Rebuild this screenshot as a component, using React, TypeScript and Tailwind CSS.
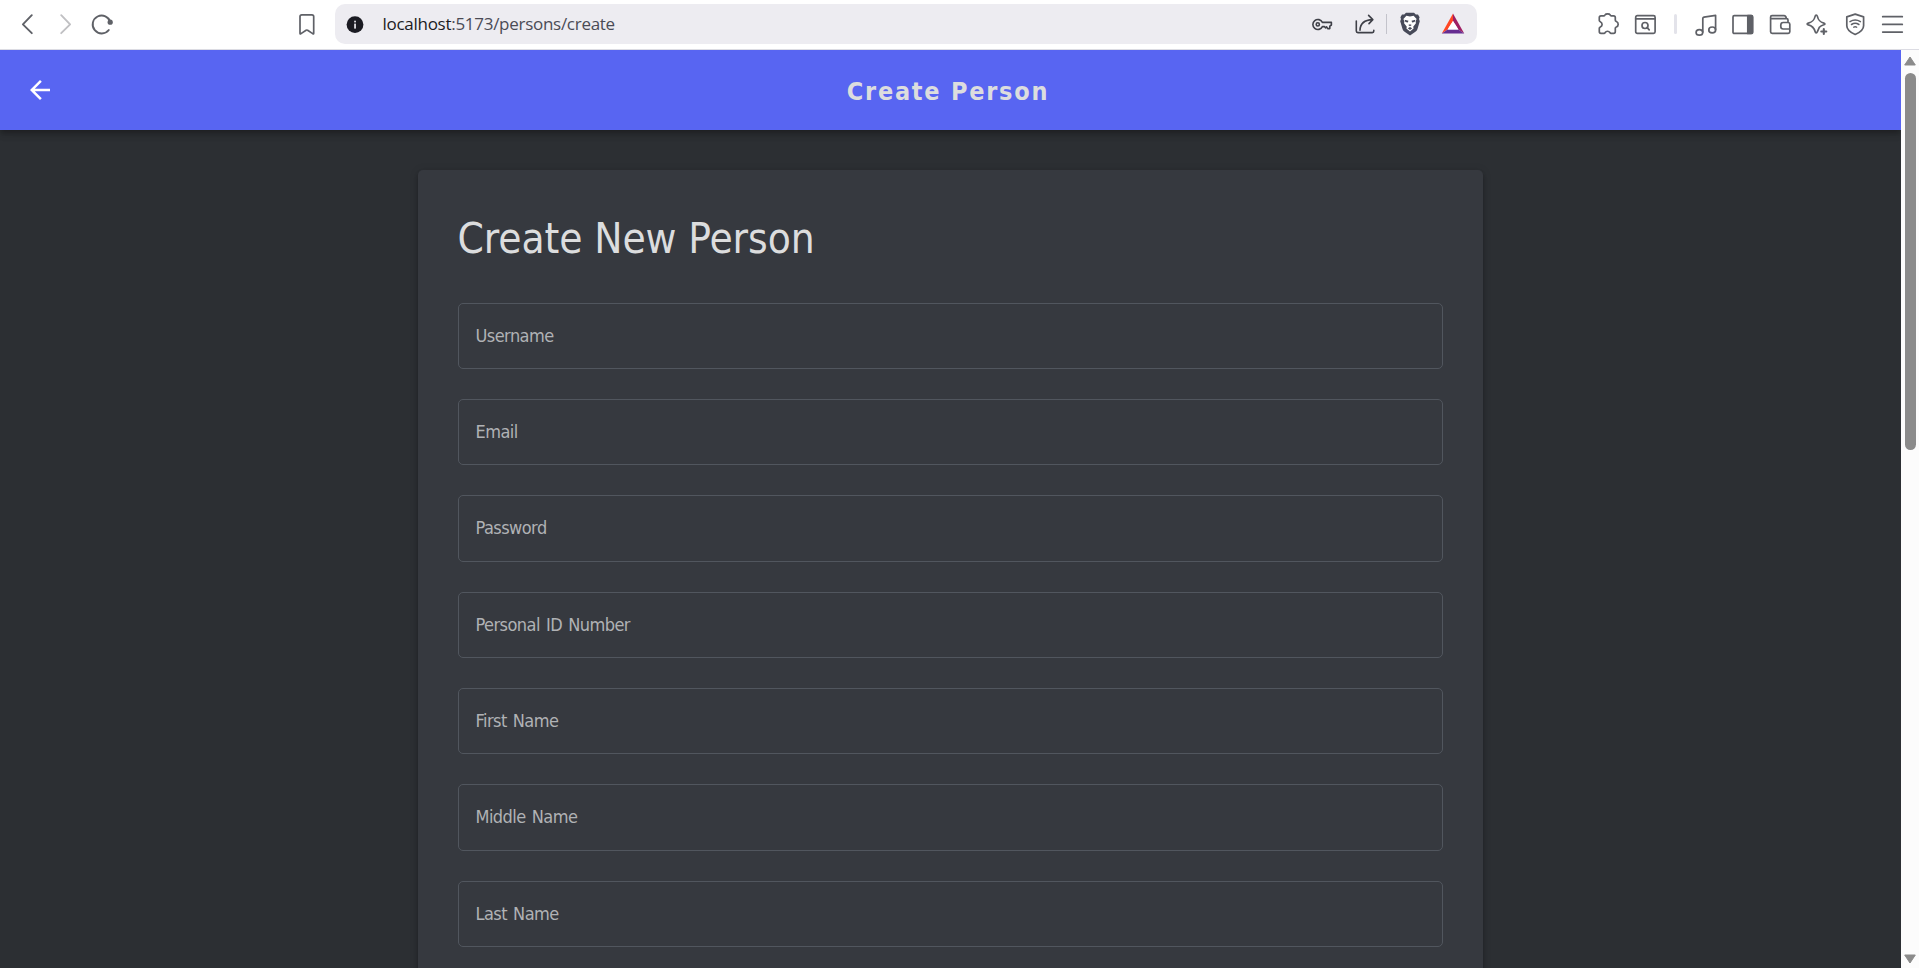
import type { ReactNode } from "react";

type IconProps = { className?: string; children: ReactNode };

function Icon({ className = "", children }: IconProps) {
  return (
    <svg
      viewBox="0 0 24 24"
      className={`size-6 shrink-0 ${className}`}
      fill="none"
      stroke="currentColor"
      strokeWidth="1.7"
      strokeLinecap="round"
      strokeLinejoin="round"
    >
      {children}
    </svg>
  );
}

function AddressBar() {
  return (
    <div className="ml-4 flex h-10 w-[1142px] shrink-0 items-center rounded-[10px] bg-[#edecf1] text-[#3f4048]">
      <svg viewBox="0 0 18 18" className="ml-[11px] size-[18px] shrink-0">
        <circle cx="9" cy="9.6" r="8.4" fill="#1b1b22" />
        <rect x="8.2" y="8.6" width="1.7" height="5" fill="#edecf1" />
        <rect x="8.2" y="5.7" width="1.7" height="1.7" fill="#edecf1" />
      </svg>
      <div className="ml-[18.5px] flex-1 font-['Open_Sans',sans-serif] text-[17px] leading-6 tracking-[-0.28px] whitespace-nowrap text-[#4a4b55]">
        <span className="text-[#1b1b22]">localhost</span>:5173/persons/create
      </div>
      <Icon className="mr-[19px]">
        <g strokeWidth="1.6">
          <path d="M12.4 10.4A5 5 0 1 0 12.4 14.6H14.4L15.4 15.8L16.6 14.8L17.7 16.6H19.8V14.2L21.4 13V10.4Z" />
          <circle cx="7.8" cy="12.4" r="1.6" />
        </g>
      </Icon>
      <Icon className="mr-[9px]">
        <g strokeWidth="1.6">
          <path d="M3.3 9V19Q3.3 20.6 4.9 20.6H19.3Q20.8 20.6 20.8 19V18.4" />
          <path d="M7 18.2C7.2 11.5 11.3 7.9 19.6 7.6M15.6 3.4L19.8 7.6L16 11.6" />
        </g>
      </Icon>
      <div className="mr-[12px] h-5 w-px bg-[#c3c3cb]" />
      <svg viewBox="0 0 22 24" className="mr-[20px] h-6 w-[22px] shrink-0">
        <path
          d="M7 0.8H15L16.8 2.6L19 2.4L20.6 5.2L20 7L20.8 9.2L18.4 17.2Q17.8 18.8 16.4 19.8L11 23.6L5.6 19.8Q4.2 18.8 3.6 17.2L1.2 9.2L2 7L1.4 5.2L3 2.4L5.2 2.6Z"
          fill="#474a59"
        />
        <path
          d="M7.4 3.8L11 4.5L14.6 3.8L17.6 7L16.6 9.2L16.9 11.2L14.2 14.8L14.6 16.4L11 19.4L7.4 16.4L7.8 14.8L5.1 11.2L5.4 9.2L4.4 7Z"
          fill="#ffffff"
        />
        <path
          d="M5.6 7.8L9.5 8.7L8.8 10.4L6.4 9.9ZM16.4 7.8L12.5 8.7L13.2 10.4L15.6 9.9ZM9.3 13L11 14.2L12.7 13L11.8 12.5H10.2ZM8.8 16.2L11 15L13.2 16.2L11 17.9Z"
          fill="#474a59"
        />
      </svg>
      <svg viewBox="0 0 24 24" className="mr-[12px] size-6 shrink-0">
        <path d="M12 1.6L0.8 21.6L6.6 17.6L12 9Z" fill="#ff4724" />
        <path d="M12 1.6L23.2 21.6L17.4 17.6L12 9Z" fill="#9e1f63" />
        <path d="M0.8 21.6H23.2L17.4 17.6H6.6Z" fill="#662d91" />
        <path d="M12 9L6.6 17.6H17.4Z" fill="#ffffff" />
      </svg>
    </div>
  );
}

function BrowserBar() {
  return (
    <div className="flex h-[50px] shrink-0 items-center border-b border-[#dcdce3] bg-white pb-px pl-4 text-[#5f6167]">
      <Icon>
        <path strokeWidth="1.9" d="M15.8 3.2L6.9 12.3L15.8 21.2" />
      </Icon>
      <Icon className="ml-3.5 text-[#c0c0c3]">
        <path strokeWidth="1.9" d="M7.2 3.2L16.1 12.3L7.2 21.2" />
      </Icon>
      <Icon className="ml-3">
        <path strokeWidth="1.9" d="M20.4 10.2A9 9 0 1 0 18.8 18" />
        <circle cx="20.2" cy="10.2" r="2.6" fill="currentColor" stroke="none" />
      </Icon>
      <Icon className="ml-[181px]">
        <path d="M5 4.6Q5 2.8 6.8 2.8H16.9Q18.7 2.8 18.7 4.6V21.2Q18.7 22.4 17.7 21.6L12.6 18.2Q11.8 17.8 11.1 18.2L6 21.6Q5 22.4 5 21.2Z" />
      </Icon>
      <AddressBar />
      <Icon className="ml-[119px]">
        <path d="M3.3 5.6Q3.3 3.8 5 3.8H8.1C8.7 3.8 8.9 3.3 9.1 2.8C9.6 1.9 10.6 1.9 11.6 1.9S13.6 1.9 14.1 2.9C14.3 3.4 14.6 3.8 15.2 3.8H17.6Q19.3 3.8 19.3 5.6V8.2C19.3 8.9 19.7 9.2 20.4 9.5C22.9 10.7 22.7 14.2 20.3 15C19.6 15.2 19.3 15.6 19.3 16.3V19.6Q19.3 21.4 17.6 21.4H15C14.5 21.4 14.2 21 13.9 20.5C12.7 18.8 10.2 18.9 9.2 20.5C8.9 21 8.6 21.4 8 21.4H5Q3.3 21.4 3.3 19.6V16.2C3.3 15.6 3.8 15.4 4.3 15.1C6.7 13.9 6.7 11 4.3 9.8C3.7 9.5 3.3 9.3 3.3 8.6Z" />
      </Icon>
      <Icon className="ml-[13px]">
        <rect x="2.7" y="3.6" width="19.4" height="17.8" rx="1.6" />
        <path d="M2.7 6.9H22.1" />
        <circle cx="12" cy="13.5" r="3" />
        <path d="M14.2 15.7L16.2 17.8" />
      </Icon>
      <div className="ml-[17px] h-5 w-[3px] rounded-full bg-[#e3e3ea]" />
      <Icon className="ml-[17px]">
        <path d="M8.8 20V6.6Q8.8 5.4 10 5.1L21.6 3.4V17.6" />
        <ellipse cx="5.4" cy="20.4" rx="3.3" ry="2.7" />
        <ellipse cx="18.2" cy="17.9" rx="3.4" ry="2.9" />
      </Icon>
      <Icon className="ml-[13px]">
        <rect x="2" y="3.7" width="19.4" height="17.7" rx="1.2" />
        <path d="M16.8 3.7H20.6Q21.6 3.7 21.6 4.7V20.4Q21.6 21.4 20.6 21.4H16.8Z" fill="currentColor" />
      </Icon>
      <Icon className="ml-[13px]">
        <path d="M20 10V8Q20 6.6 18.6 6.6H2.6V5.1Q2.6 3.7 4 3.7H16Q18 3.7 18.4 6.6M2.6 6V19.8Q2.6 21.4 4.2 21.4H20.2Q21.8 21.4 21.8 19.8V12.2Q21.8 10.6 20.2 10.5H15.2Q12.8 10.5 12.8 13V14.6Q12.8 17 15.2 17H21.8" />
      </Icon>
      <Icon className="ml-[13px]">
        <path d="M11.2 3Q12 3 12.3 4.1C13.4 8.5 14.8 10 18.8 11.1Q21 11.9 18.8 12.8C16.8 13.4 15.4 14.1 14.4 15.2L12.3 19.8Q12 20.9 11.2 20.9T10.2 19.8C9.1 15.6 7.6 13.9 3.3 12.9Q1 12 3.3 11.1C7.6 10 9.1 8.5 10.2 4.1Q10.4 3 11.2 3Z" />
        <path d="M18.8 17V22M16.3 19.5H21.3" strokeWidth="2.1" />
      </Icon>
      <Icon className="ml-[14px]">
        <path d="M12.2 2.1L20.6 4.9V13.7C20.6 18.1 15.8 20.9 12.2 22.5C8.6 20.9 3.8 18.1 3.8 13.7V4.9Z" />
        <path d="M7 9.7Q12.2 6.5 17.4 9.7M8.5 12.5Q12.2 10.1 15.9 12.5M10.8 15.1Q12.2 14.5 13.6 15.1" strokeWidth="1.5" />
      </Icon>
      <Icon className="ml-[13px]">
        <path d="M2.7 4.7H22.3M2.7 12.4H22.3M2.7 20.1H22.3" />
      </Icon>
    </div>
  );
}

function PageHeader() {
  return (
    <header className="relative z-10 flex h-20 shrink-0 items-center bg-[#5865f2] shadow-[0_2px_5px_-1px_rgba(0,0,0,0.2),0_5px_6px_0_rgba(0,0,0,0.14),0_1px_12px_0_rgba(0,0,0,0.12)]">
      <button className="flex w-20 justify-center" aria-label="Back">
        <svg viewBox="0 0 24 24" className="size-[30px]" fill="#ffffff">
          <path d="M20 11H7.83l5.59-5.59L12 4l-8 8 8 8 1.41-1.41L7.83 13H20v-2z" />
        </svg>
      </button>
      <div className="flex-1 pt-[3px] pr-[85px] text-center text-[25px] leading-8 font-bold tracking-[1.75px] text-[#dcddde]">
        Create Person
      </div>
    </header>
  );
}

const fields = [
  "Username",
  "Email",
  "Password",
  "Personal ID Number",
  "First Name",
  "Middle Name",
  "Last Name",
];

function PersonForm() {
  return (
    <section className="mx-auto mt-10 h-[900px] w-[1065px] rounded-[5px] bg-[#36393f] px-10 pt-10 shadow-[0_4px_5px_-2px_rgba(0,0,0,0.2),0_3px_5px_0_rgba(0,0,0,0.14),0_1px_10px_0_rgba(0,0,0,0.12)]">
      <h1 className="mb-[35.7px] -ml-[0.5px] text-[42px] leading-[57px] tracking-[-0.1px] text-[#dcddde]">
        Create New Person
      </h1>
      <form className="flex flex-col gap-[30px]">
        {fields.map((field) => (
          <label
            key={field}
            className="flex h-[66.37px] items-center rounded-[5px] border border-[#51565e] pb-[0.5px] pl-[16.5px] text-lg leading-7 tracking-[-0.55px] text-[#b0b2b5] [word-spacing:1.5px]"
          >
            {field}
          </label>
        ))}
      </form>
    </section>
  );
}

function Scrollbar() {
  return (
    <div className="flex w-[18px] shrink-0 flex-col items-center bg-[#fcfcfc]">
      <svg viewBox="0 0 12 10" className="mt-[6px] h-2.5 w-3" fill="#8b8b8b" stroke="#8b8b8b" strokeLinejoin="round">
        <path d="M6 1L11.3 9H0.7Z" />
      </svg>
      <div className="mt-[7px] ml-px h-[377px] w-[11px] rounded-full bg-[#8b8b8b]" />
      <svg viewBox="0 0 12 10" className="mt-auto mb-1 h-2.5 w-3" fill="#8b8b8b" stroke="#8b8b8b" strokeLinejoin="round">
        <path d="M6 9L0.7 1H11.3Z" />
      </svg>
    </div>
  );
}

export default function App() {
  return (
    <div className="flex h-[968px] w-[1919px] flex-col overflow-hidden font-['DejaVu_Sans_Condensed','DejaVu_Sans',sans-serif]">
      <BrowserBar />
      <div className="flex min-h-0 flex-1">
        <main className="flex min-w-0 flex-1 flex-col overflow-hidden bg-[#2c2f33]">
          <PageHeader />
          <div className="min-h-0 flex-1">
            <PersonForm />
          </div>
        </main>
        <Scrollbar />
      </div>
    </div>
  );
}
